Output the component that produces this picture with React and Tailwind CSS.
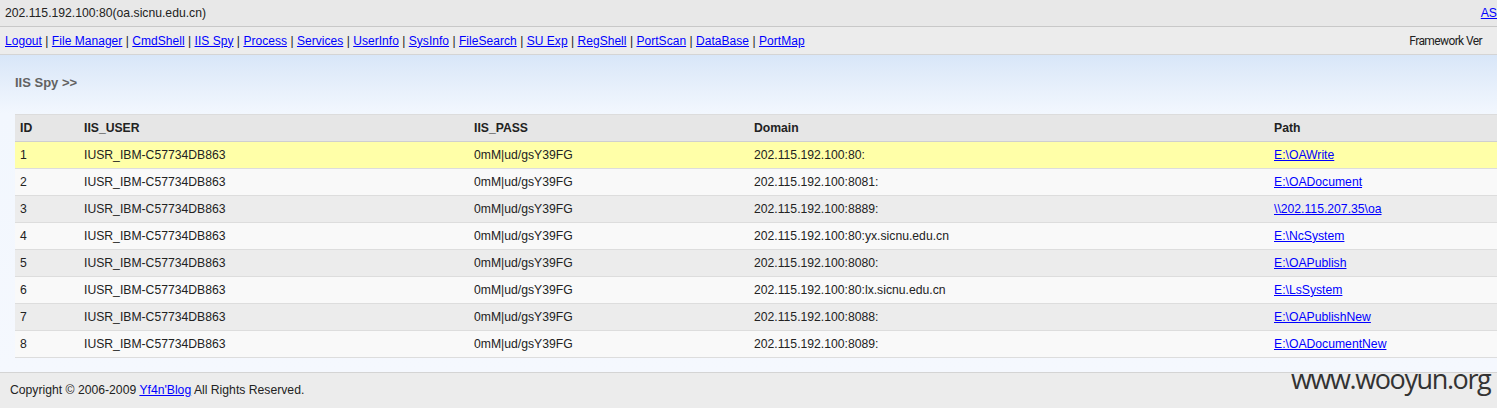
import React from 'react';

const navLinks = [
  'Logout', 'File Manager', 'CmdShell', 'IIS Spy', 'Process', 'Services', 'UserInfo',
  'SysInfo', 'FileSearch', 'SU Exp', 'RegShell', 'PortScan', 'DataBase', 'PortMap',
];

const rows = [
  { id: 1, domain: '202.115.192.100:80:', path: 'E:\\OAWrite' },
  { id: 2, domain: '202.115.192.100:8081:', path: 'E:\\OADocument' },
  { id: 3, domain: '202.115.192.100:8889:', path: '\\\\202.115.207.35\\oa' },
  { id: 4, domain: '202.115.192.100:80:yx.sicnu.edu.cn', path: 'E:\\NcSystem' },
  { id: 5, domain: '202.115.192.100:8080:', path: 'E:\\OAPublish' },
  { id: 6, domain: '202.115.192.100:80:lx.sicnu.edu.cn', path: 'E:\\LsSystem' },
  { id: 7, domain: '202.115.192.100:8088:', path: 'E:\\OAPublishNew' },
  { id: 8, domain: '202.115.192.100:8089:', path: 'E:\\OADocumentNew' },
];

const cols = 'grid grid-cols-[64px_390px_280px_520px_1fr]';

export default function App() {
  return (
    <div className="relative w-[1497px] h-[408px] overflow-hidden bg-[#ececec] font-['Liberation_Sans',Arial,sans-serif] text-[12.2px] text-[#222]">
      {/* Top bar */}
      <div className="h-[27px] bg-[#e8e8e8] border-b border-[#c8c8c8] flex items-center justify-between pl-[5px]">
        <span>202.115.192.100:80(oa.sicnu.edu.cn)</span>
        <a href="#" className="text-[#0000ff] underline">AS</a>
      </div>

      {/* Nav bar */}
      <div className="h-[28px] bg-[#ececec] border-b border-[#d4d4d4] flex items-center justify-between pl-[5px] pr-[15px]">
        <div className="text-[12px] tracking-[0.04px]">
          {navLinks.map((l, i) => (
            <span key={l}>
              {i > 0 && <span> | </span>}
              <a href="#" className="text-[#0000ff] underline">{l}</a>
            </span>
          ))}
        </div>
        <span className="font-['Roboto',sans-serif] text-[12px] tracking-[-0.6px] text-[#222]">Framework Ver</span>
      </div>

      {/* Content */}
      <div className="h-[318px] border-b border-[#d4d4d4] bg-[linear-gradient(180deg,#d8e6f8_0px,#e6effb_30px,#f2f7fe_58px,#f5f8fe_100%)]">
        <div className="h-[59px] pl-[15px] flex items-center pb-[4px] font-bold text-[13px] text-[#626262]">
          IIS Spy &gt;&gt;
        </div>
        <div className="ml-[15px] border-t border-[#dcdcdc]">
          <div className={`${cols} h-[27px] items-center bg-[#e6e6e6] border-b border-[#cfcfcf] font-bold text-[#222]`}>
            <div className="pl-[5px]">ID</div>
            <div className="pl-[5px]">IIS_USER</div>
            <div className="pl-[5px]">IIS_PASS</div>
            <div className="pl-[5px]">Domain</div>
            <div className="pl-[5px]">Path</div>
          </div>
          {rows.map((r) => (
            <div
              key={r.id}
              className={`${cols} h-[27px] items-center border-b border-[#dddddd] ${
                r.id === 1 ? 'bg-[#ffffa8]' : r.id % 2 === 1 ? 'bg-[#ececec]' : 'bg-[#f9f9f9]'
              }`}
            >
              <div className="pl-[5px]">{r.id}</div>
              <div className="pl-[5px]">IUSR_IBM-C57734DB863</div>
              <div className="pl-[5px]">0mM|ud/gsY39FG</div>
              <div className="pl-[5px]">{r.domain}</div>
              <div className="pl-[5px]">
                <a href="#" className="text-[#0000ff] underline">{r.path}</a>
              </div>
            </div>
          ))}
        </div>
      </div>

      {/* Footer */}
      <div className="h-[35px] flex items-center pl-[10px] pb-[1px]">
        <span>
          Copyright © 2006-2009 <a href="#" className="text-[#0000ff] underline">Yf4n'Blog</a> All Rights Reserved.
        </span>
      </div>

      {/* Watermark */}
      <div className="absolute left-[1291px] top-[362px] text-[27px] leading-[34px] text-[#333] font-['Open_Sans',sans-serif] tracking-[-1.4px]">
        www.wooyun.org
      </div>
    </div>
  );
}
